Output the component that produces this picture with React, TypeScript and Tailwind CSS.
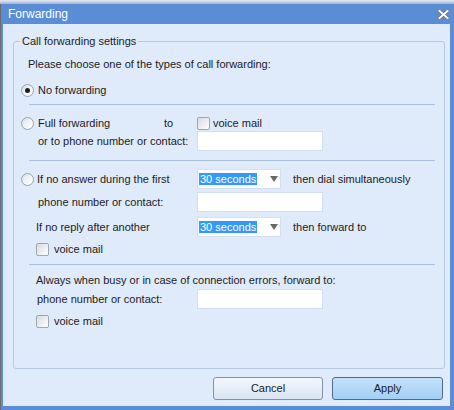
import React from "react"

const font = { fontFamily: '"Liberation Sans", Arial, sans-serif' }

function Radio({ checked = false }: { checked?: boolean }) {
  return (
    <span className="flex h-[13px] w-[13px] shrink-0 items-center justify-center rounded-full border border-[#9aa3ae] bg-gradient-to-br from-[#d9dde3] via-[#f1f3f5] to-white">
      {checked && <span className="h-[5px] w-[5px] rounded-full bg-[#1e1e1e]" />}
    </span>
  )
}

function Check() {
  return (
    <span className="block h-[13px] w-[13px] shrink-0 rounded-[2px] border border-[#9da6b1] bg-gradient-to-br from-[#d8dbe0] to-white" />
  )
}

function Field() {
  return <span className="block h-[20px] w-[126px] border border-[#d3dff0] bg-white" />
}

function Seconds() {
  return (
    <span className="flex h-[20px] w-[84px] items-center border border-[#d3dff0] bg-white pl-[1px]">
      <span className="bg-[#3399ff] px-[1px] leading-[12px] text-white">30 seconds</span>
      <svg width="8" height="6" viewBox="0 0 8 6" className="ml-[13px]">
        <path d="M0 0h8L4 6z" fill="#6a6a6a" />
      </svg>
    </span>
  )
}

function Sep({ mt }: { mt: string }) {
  return <div className={`${mt} ml-[8px] h-px w-[406px] bg-[#a9bfe0]`} />
}

export default function App() {
  return (
    <div
      className="flex h-[410px] w-[454px] flex-col bg-[#5b8cd6] text-[11px] text-[#1c1c1c]"
      style={font}
    >
      {/* TITLE BAR */}
      <div className="h-[4px] bg-gradient-to-b from-[#e6ebf2] to-[#9fb6da]" />
      <div className="flex h-[20px] items-center justify-between border-l border-[#6b6b6b] pl-[7px] pr-[5px]">
        <span className="text-[12px] text-white">Forwarding</span>
        <svg width="11" height="9" viewBox="0 0 11 9">
          <path d="M1.5 1 9.5 8M9.5 1 1.5 8" stroke="#6a6f78" strokeWidth="3.6" strokeLinecap="square" />
          <path d="M1.5 1 9.5 8M9.5 1 1.5 8" stroke="#ffffff" strokeWidth="2" strokeLinecap="square" />
        </svg>
      </div>

      {/* BODY */}
      <div className="flex flex-1 border-l border-[#6b6b6b]">
        <div className="mb-[4px] ml-[2px] mr-[4px] flex flex-1 flex-col bg-[#dfeafb]">
          {/* GROUP */}
          <div className="relative ml-[10px] mt-[17px] flex h-[328px] w-[432px] flex-col rounded-[3px] border border-[#b6c8e2] pl-[7px]">
            <span className="absolute left-[6px] top-[-8px] bg-[#dfeafb] px-[2px] leading-[14px]">
              Call forwarding settings
            </span>

            <div className="ml-[7px] mt-[14px] flex h-[16px] items-center">
              Please choose one of the types of call forwarding:
            </div>

            <div className="mt-[9px] flex h-[18px] items-center gap-[4px]">
              <Radio checked />
              <span>No forwarding</span>
            </div>

            <Sep mt="mt-[5px]" />

            <div className="mt-[11px] flex h-[14px] items-center">
              <Radio />
              <span className="ml-[4px] w-[126px]">Full forwarding</span>
              <span className="w-[33px]">to</span>
              <Check />
              <span className="ml-[3px]">voice mail</span>
            </div>

            <div className="mt-[1px] flex h-[20px] items-center">
              <span className="ml-[17px] w-[159px]">or to phone number or contact:</span>
              <Field />
            </div>

            <Sep mt="mt-[9px]" />

            <div className="mt-[8px] flex h-[20px] items-center">
              <Radio />
              <span className="ml-[3px] w-[160px]">If no answer during the first</span>
              <Seconds />
              <span className="ml-[12px]">then dial simultaneously</span>
            </div>

            <div className="mt-[3px] flex h-[20px] items-center">
              <span className="ml-[17px] w-[159px]">phone number or contact:</span>
              <Field />
            </div>

            <div className="mt-[5px] flex h-[20px] items-center">
              <span className="ml-[15px] w-[161px]">If no reply after another</span>
              <Seconds />
              <span className="ml-[12px]">then forward to</span>
            </div>

            <div className="ml-[15px] mt-[6px] flex h-[13px] items-center gap-[5px]">
              <Check />
              <span>voice mail</span>
            </div>

            <Sep mt="mt-[8px]" />

            <div className="ml-[15px] mt-[8px] flex h-[14px] items-center">
              Always when busy or in case of connection errors, forward to:
            </div>

            <div className="mt-[2px] flex h-[20px] items-center">
              <span className="ml-[16px] w-[160px]">phone number or contact:</span>
              <Field />
            </div>

            <div className="ml-[15px] mt-[6px] flex h-[13px] items-center gap-[5px]">
              <Check />
              <span>voice mail</span>
            </div>
          </div>

          {/* BUTTONS */}
          <div className="mt-[8px] flex justify-end gap-[9px] pr-[7px]">
            <button className="h-[23px] w-[110px] rounded-[3px] border border-[#8592a3] bg-gradient-to-b from-[#f3f7fc] to-[#d9e4f3] text-[11px] text-[#1c1c1c]">
              Cancel
            </button>
            <button className="h-[23px] w-[111px] rounded-[3px] border border-[#51698a] bg-gradient-to-b from-[#c3e1fb] to-[#a3cff5] text-[11px] text-[#1c1c1c]">
              Apply
            </button>
          </div>
        </div>
      </div>
    </div>
  )
}
